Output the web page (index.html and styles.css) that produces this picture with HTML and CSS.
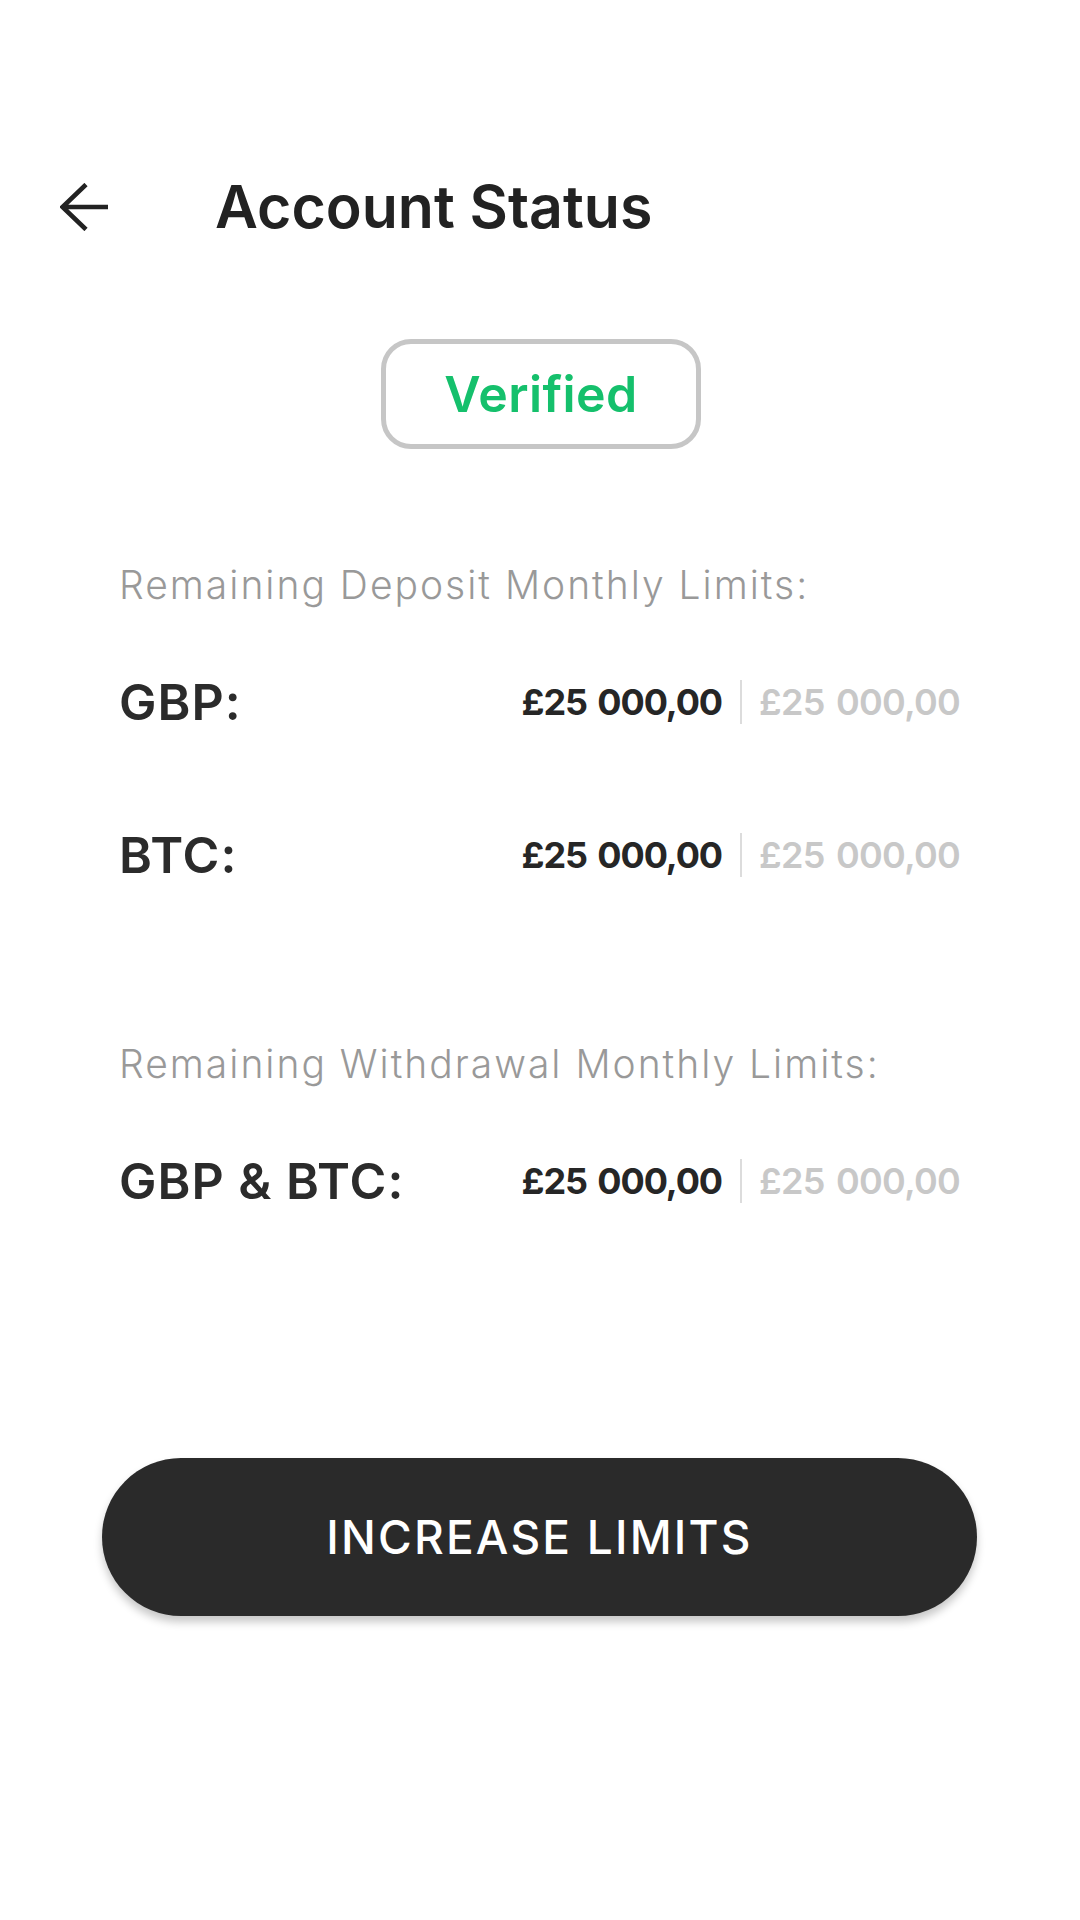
FILE: index.html
```html
<!DOCTYPE html>
<html lang="en">
<head>
<meta charset="utf-8">
<title>Account Status</title>
<link rel="stylesheet" href="styles.css">
</head>
<body>
<div class="screen">
  <header class="header">
    <svg class="back" width="48" height="48" viewBox="0 0 48 48" aria-hidden="true">
      <path d="M26 1.5 L2.5 24 L26 46.5 M2.5 24 H48" fill="none" stroke="#222" stroke-width="4.6"/>
    </svg>
    <h1 class="title">Account Status</h1>
  </header>

  <div class="badge-wrap">
    <div class="badge">Verified</div>
  </div>

  <section class="limits">
    <p class="section-label">Remaining Deposit Monthly Limits:</p>
    <div class="row row-first">
      <span class="currency">GBP:</span>
      <span class="amounts"><span class="amt">£25 000,00</span><span class="sep"></span><span class="amt-total">£25 000,00</span></span>
    </div>
    <div class="row row-second">
      <span class="currency">BTC:</span>
      <span class="amounts"><span class="amt">£25 000,00</span><span class="sep"></span><span class="amt-total">£25 000,00</span></span>
    </div>

    <p class="section-label section-label-2">Remaining Withdrawal Monthly Limits:</p>
    <div class="row row-first">
      <span class="currency">GBP &amp; BTC:</span>
      <span class="amounts"><span class="amt">£25 000,00</span><span class="sep"></span><span class="amt-total">£25 000,00</span></span>
    </div>
  </section>

  <div class="action">
    <button class="btn">INCREASE LIMITS</button>
  </div>
</div>
</body>
</html>
```

FILE: styles.css
```css
* { box-sizing: border-box; }

html, body {
  margin: 0;
  padding: 0;
  background: #ffffff;
}

body {
  font-family: "Inter", "Liberation Sans", sans-serif;
  color: #2b2b2b;
}

.screen {
  width: 1080px;
  height: 1920px;
  display: flex;
  flex-direction: column;
}

.header {
  margin-top: 159px;
  height: 96px;
  display: flex;
  align-items: center;
  padding-left: 60px;
}

.back {
  display: block;
  flex: none;
}

.title {
  margin: 0 0 0 107px;
  font-size: 59px;
  font-weight: 600;
  color: #222222;
  line-height: 96px;
  letter-spacing: 0;
}

.badge-wrap {
  display: flex;
  justify-content: center;
  margin-top: 84px;
  padding-left: 2px;
}

.badge {
  width: 320px;
  height: 110px;
  border: 5px solid #c6c6c6;
  border-radius: 30px;
  display: flex;
  align-items: center;
  justify-content: center;
  font-size: 50px;
  font-weight: 600;
  color: #15c06c;
  letter-spacing: 0.4px;
}

.limits {
  padding: 0 120px 0 119px;
  display: flex;
  flex-direction: column;
}

.section-label {
  margin: 112px 0 0 0;
  font-size: 39px;
  line-height: 48px;
  font-weight: 300;
  color: #999999;
  letter-spacing: 2px;
}

.section-label-2 {
  margin-top: 155px;
}

.row {
  height: 60px;
  display: flex;
  align-items: center;
  justify-content: space-between;
}

.row-first { margin-top: 63px; }
.row-second { margin-top: 93px; }

.currency {
  font-size: 50px;
  font-weight: 600;
  color: #2b2b2b;
  letter-spacing: 1px;
}

.amounts {
  display: flex;
  align-items: center;
  font-size: 36px;
}

.amt {
  font-weight: 700;
  color: #262626;
  letter-spacing: -1.1px;
  word-spacing: 3px;
}

.sep {
  width: 2px;
  height: 44px;
  background: #dcdcdc;
  margin: 0 17px 0 18px;
}

.amt-total {
  font-weight: 600;
  color: #c8c8c8;
  letter-spacing: -0.7px;
  word-spacing: 3px;
}

.action {
  margin-top: 247px;
  padding: 0 103px 0 102px;
}

.btn {
  width: 100%;
  height: 158px;
  border: none;
  border-radius: 79px;
  background: #2a2a2a;
  color: #ffffff;
  font-family: "Inter", "Liberation Sans", sans-serif;
  font-size: 46px;
  font-weight: 500;
  letter-spacing: 2.2px;
  box-shadow: 0 6px 8px rgba(0, 0, 0, 0.22);
}
```
